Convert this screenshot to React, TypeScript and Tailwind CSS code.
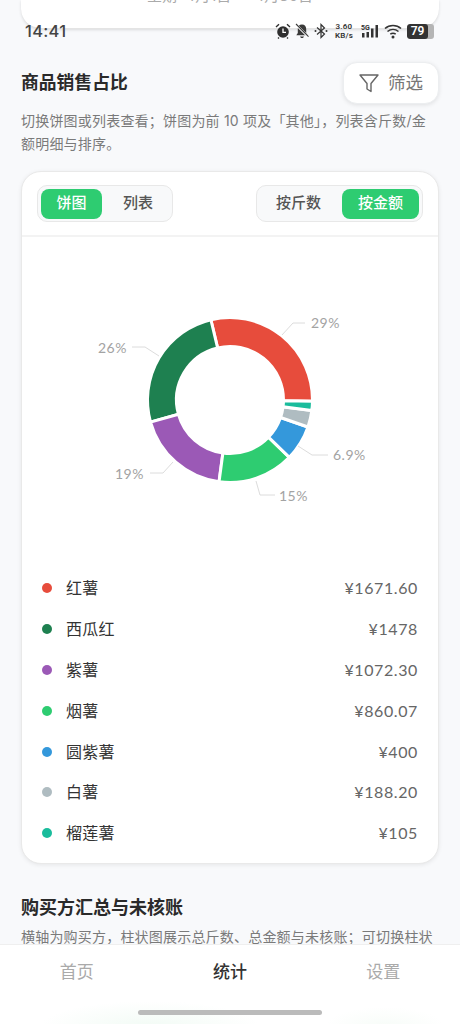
const cjk = "font-['Inter','Noto_Sans_CJK_SC',sans-serif]";

const sales = [
  { name: "红薯", amount: "¥1671.60", value: 1671.6, color: "#e74c3c" },
  { name: "西瓜红", amount: "¥1478", value: 1478, color: "#1e8050" },
  { name: "紫薯", amount: "¥1072.30", value: 1072.3, color: "#9b59b6" },
  { name: "烟薯", amount: "¥860.07", value: 860.07, color: "#2ecc71" },
  { name: "圆紫薯", amount: "¥400", value: 400, color: "#3498db" },
  { name: "白薯", amount: "¥188.20", value: 188.2, color: "#afbcc1" },
  { name: "榴莲薯", amount: "¥105", value: 105, color: "#1abc9c" },
];

const labels = [
  { text: "29%", x: 311, y: 328, line: "282,335 293,323 305,323" },
  { text: "26%", x: 98, y: 353, line: "132,347 145,347 159,356" },
  { text: "19%", x: 115, y: 479, line: "150,473 163,473 173,462" },
  { text: "15%", x: 279, y: 501, line: "256,481 260,495 275,495" },
  { text: "6.9%", x: 333, y: 460, line: "298,446 312,455 328,455" },
];

// donut runs counter-clockwise from just under 3 o'clock
function slicePath(start: number, end: number) {
  const cx = 230;
  const cy = 400;
  const R = 82.5;
  const r = 53.5;
  const p = (rad: number, a: number) =>
    `${(cx + rad * Math.cos(a)).toFixed(2)} ${(cy - rad * Math.sin(a)).toFixed(2)}`;
  const large = end - start > Math.PI ? 1 : 0;
  return `M${p(R, start)} A${R} ${R} 0 ${large} 0 ${p(R, end)} L${p(r, end)} A${r} ${r} 0 ${large} 1 ${p(r, start)} Z`;
}

function Donut() {
  const total = sales.reduce((sum, s) => sum + s.value, 0);
  let angle = -0.014;
  return (
    <svg viewBox="22 237 416 331" className="block h-[331px] w-[416px]">
      {sales.map((s) => {
        const start = angle;
        angle += (s.value / total) * Math.PI * 2;
        return <path key={s.name} d={slicePath(start, angle)} fill={s.color} stroke="#fff" strokeWidth="3" />;
      })}
      {labels.map((l) => (
        <g key={l.text}>
          <polyline points={l.line} fill="none" stroke="#dcdcdc" strokeWidth="1" />
          <text x={l.x} y={l.y} fontSize="14" fill="#a3a3a3" fontFamily="Lato, sans-serif" letterSpacing="0.5">
            {l.text}
          </text>
        </g>
      ))}
    </svg>
  );
}

function StatusIcons() {
  return (
    <div className="flex items-center text-[#333]">
      <svg viewBox="0 0 16 16" className="h-4 w-4">
        <circle cx="8" cy="9" r="5.8" fill="#2f2f2f" />
        <path d="M8 5.6V9.4H11" fill="none" stroke="#fff" strokeWidth="1.3" />
        <path d="M1 4 4 1.3M15 4 12 1.3M4 14.5 3 15.5M12 14.5 13 15.5" stroke="#2f2f2f" strokeWidth="1.4" />
      </svg>
      <svg viewBox="0 0 16 16" className="ml-[3px] h-4 w-4">
        <path d="M8 1.5C5.3 1.5 3.8 3.6 3.8 6V10L2.3 12.2H13.7L12.2 10V6C12.2 3.6 10.7 1.5 8 1.5Z" fill="#3a3a3a" />
        <path d="M6 13.6H10L9 15H7Z" fill="#3a3a3a" />
        <path d="M2 1.5 14.5 14" stroke="#fff" strokeWidth="2.4" />
        <path d="M2 1 14.5 13.6" stroke="#3a3a3a" strokeWidth="1.1" />
      </svg>
      <svg viewBox="0 0 14 16" className="ml-[4px] h-4 w-[14px]">
        <path d="M3 4.5 10.5 11 7 14.5V1.5L10.5 5 3 11.5" fill="none" stroke="#333" strokeWidth="1.2" />
        <circle cx="1.5" cy="8" r="1" fill="#333" />
        <circle cx="12.5" cy="8" r="1" fill="#333" />
      </svg>
      <div className="ml-[6px] flex w-[20px] flex-col items-center text-[8px] leading-[9px] font-semibold tracking-[0.2px] font-['Roboto',sans-serif]">
        <span>3.60</span>
        <span>KB/s</span>
      </div>
      <svg viewBox="0 0 18 16" className="ml-[7px] h-4 w-[18px]">
        <text x="0" y="6.5" fontSize="7" fontWeight="700" fill="#333" fontFamily="Roboto, sans-serif">5G</text>
        <path d="M1 10H3.5V14.5H1ZM5.5 9H8V14.5H5.5ZM10 5.5H12.5V14.5H10ZM14.5 2H17V14.5H14.5Z" fill="#333" />
      </svg>
      <svg viewBox="0 0 19 16" className="ml-[5px] h-4 w-[19px]">
        <path d="M1 5.5C5.5 1.5 12.5 1.5 17 5.5M3.5 8.5C6.8 5.8 11.2 5.8 14.5 8.5M6.3 11.2C8 10 10 10 11.7 11.2" fill="none" stroke="#333" strokeWidth="1.6" />
        <circle cx="9" cy="14" r="1.5" fill="#333" />
      </svg>
      <div className="ml-[4px] flex h-[15px] w-[27px] items-center overflow-hidden rounded-[3px] bg-[#b5b5b5]">
        <div className="flex h-full w-[21px] items-center justify-center rounded-[3px] bg-[#333] text-[12px] leading-none font-semibold text-white font-['Roboto',sans-serif]">
          79
        </div>
      </div>
    </div>
  );
}

function Segment({ items, active, widths }: { items: string[]; active: string; widths: string[] }) {
  return (
    <div className="flex h-[37px] items-center gap-[5px] rounded-[10px] border border-[#e8e8e8] bg-[#f8f9fa] px-[3px]">
      {items.map((item, i) => (
        <div
          key={item}
          className={`flex h-[30px] items-center justify-center rounded-[8px] text-[15px] font-medium ${widths[i]} ${
            item === active ? "bg-[#2ecc71] text-white" : "text-[#555]"
          }`}
        >
          {item}
        </div>
      ))}
    </div>
  );
}

export default function App() {
  return (
    <div className={`relative h-[1024px] w-[460px] overflow-hidden bg-[#f8f9fb] ${cjk}`}>
      <div className="mx-[21px] flex h-[29px] items-start justify-center rounded-b-[20px] border-b border-[#e4e4e4] bg-white shadow-[0_1px_3px_rgba(0,0,0,0.12)]">
        <p className="-mt-[14px] text-[15px] leading-[20px] text-[#aaa]">星期: 4月1日 — 4月30日</p>
      </div>

      <div className="px-[21px]">
        <div className="mt-[33px] flex h-[42px] items-center justify-between">
          <h2 className="text-[17.8px] font-semibold text-[#2a2a2a]">商品销售占比</h2>
          <button className="flex h-[42px] w-[96px] items-center justify-center gap-[9px] rounded-[14px] border border-[#eceef0] bg-white text-[17.5px] text-[#777] shadow-[0_1px_4px_rgba(0,0,0,0.1)]">
            <svg viewBox="0 0 20 20" className="h-[20px] w-[20px]" fill="none" stroke="#666" strokeWidth="1.4" strokeLinejoin="round">
              <path d="M1 2H19L12 10.5V18.5L8 16V10.5Z" />
            </svg>
            筛选
          </button>
        </div>

        <p className="mt-[5px] text-[14px] leading-[23px] tracking-[0.2px] text-[#7a7a7a]">
          切换饼图或列表查看；饼图为前 10 项及「其他」，列表含斤数/金额明细与排序。
        </p>

        <div className="mt-[16px] h-[693px] rounded-[20px] border border-[#e9e9e9] bg-white shadow-[0_1px_4px_rgba(0,0,0,0.08)]">
          <div className="flex h-[65px] items-center justify-between border-b-2 border-[#f3f3f3] px-[15px]">
            <Segment items={["饼图", "列表"]} active="饼图" widths={["w-[61px]", "w-[62px]"]} />
            <Segment items={["按斤数", "按金额"]} active="按金额" widths={["w-[77px]", "w-[77px]"]} />
          </div>
          <Donut />
          <div className="px-[20px]">
            {sales.map((s) => (
              <div key={s.name} className="flex h-[40.8px] items-center">
                <span className="h-[10px] w-[10px] rounded-full" style={{ backgroundColor: s.color }} />
                <span className="ml-[14px] flex-1 text-[16px] tracking-[0.2px] text-[#333]">{s.name}</span>
                <span className="text-[16px] tracking-[0.6px] text-[#666] font-['Lato','Noto_Sans_CJK_SC',sans-serif]">{s.amount}</span>
              </div>
            ))}
          </div>
        </div>

        <h2 className="mt-[30px] text-[18px] leading-[27px] font-semibold text-[#2a2a2a]">购买方汇总与未核账</h2>
        <p className="mt-[4px] whitespace-nowrap text-[14px] leading-[23px] tracking-[0.2px] text-[#7a7a7a]">
          横轴为购买方，柱状图展示总斤数、总金额与未核账；可切换柱状
        </p>
      </div>

      {/* status bar */}
      <div className="absolute top-[22px] left-[25px] right-[26px] flex items-center justify-between">
        <span className="text-[16.5px] leading-[17px] font-medium tracking-[0.3px] text-[#444]">14:41</span>
        <StatusIcons />
      </div>

      {/* bottom tabs */}
      <div className="absolute bottom-0 left-0 h-[80px] w-full border-t border-[#efefef] bg-white bg-[radial-gradient(ellipse_110px_26px_at_150px_82px,#f2fbf5,transparent),radial-gradient(ellipse_60px_20px_at_385px_82px,#f7fcf8,transparent)]">
        <div className="grid h-[56px] grid-cols-3 items-center pb-[1px] text-center text-[17px] text-[#aaa]">
          <span>首页</span>
          <span className="font-medium text-[#333]">统计</span>
          <span>设置</span>
        </div>
        <div className="absolute top-[65px] left-[138px] h-[5px] w-[184px] rounded-full bg-[#bbb]" />
      </div>
    </div>
  );
}
